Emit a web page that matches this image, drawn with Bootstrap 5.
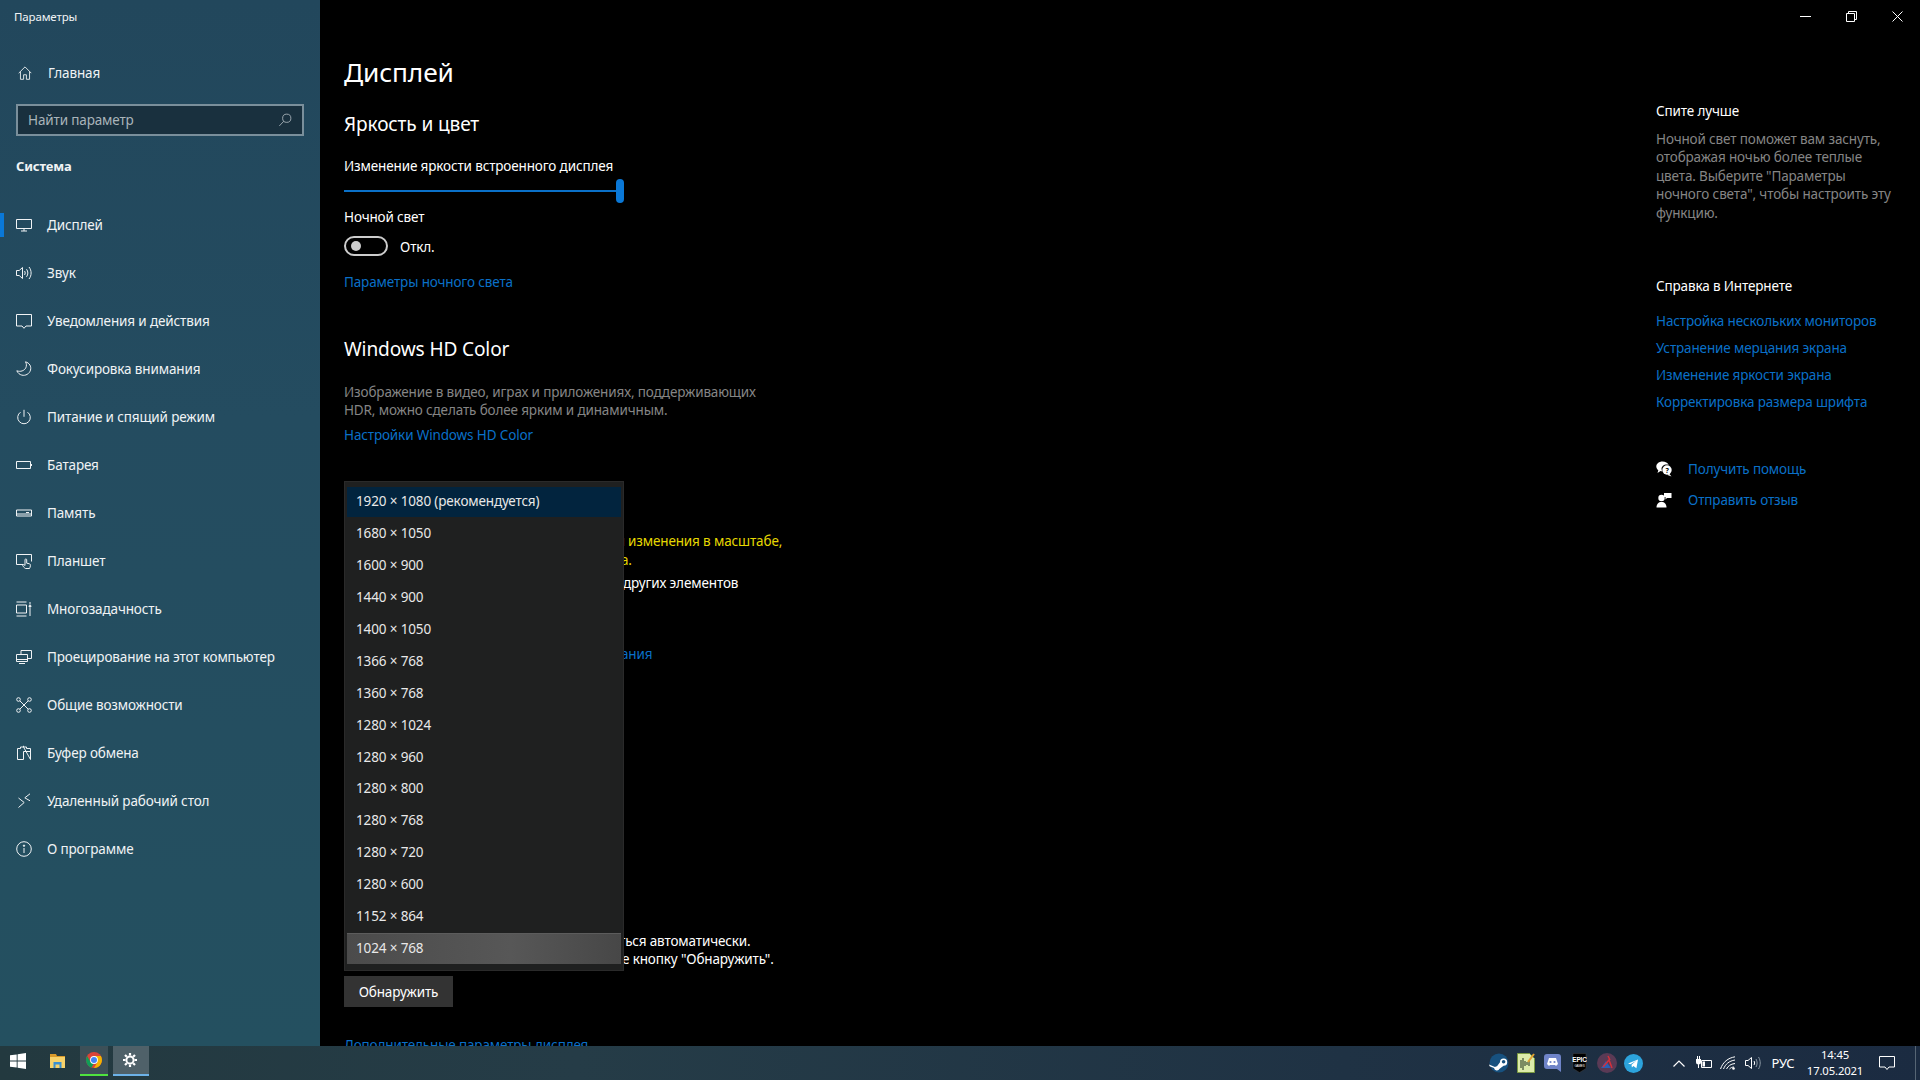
<!DOCTYPE html>
<html lang="ru">
<head>
  <meta charset="UTF-8">
  <title>Параметры</title>
  <link href="https://cdn.jsdelivr.net/npm/bootstrap@5.3.2/dist/css/bootstrap.min.css" rel="stylesheet">
  <style>
    html, body { height: 100%; }
    body {
      width: 1920px; height: 1080px; overflow: hidden; background: #000; color: #fff;
      font-family: "Noto Sans", "Open Sans", sans-serif; font-size: 13.5px; line-height: 20px; letter-spacing: -.14px;
    }
    svg { display: block; fill: none; stroke: currentColor; stroke-width: 1; flex: none; }
    a { text-decoration: none; color: #0a70c8; }
    .app-row { height: 1046px; }

    /* sidebar */
    .side-pane { width: 320px; background: linear-gradient(180deg, #22475c 0%, #244c60 40%, #245060 100%); color: #f0f3f5; }
    .app-name { font-size: 11.5px; padding: 7px 0 0 14px; height: 53px; }
    .side-link { height: 48px; padding-left: 16px; gap: 15px; color: #f0f3f5; }
    .side-link.home-link { height: 40px; padding-left: 18px; gap: 16px; }
    .side-link.on { position: relative; }
    .side-link.on::before { content: ""; position: absolute; left: 0; top: 12px; width: 4px; height: 24px; background: #0a78d7; }
    .search-box { margin: 11px 16px 0; height: 32px; border: 2px solid #7a8f9b; background: #19303e; color: #a9b4ba; padding: 0 10px; }
    .group-name { font-weight: 700; font-size: 13px; padding: 20px 0 0 16px; height: 65px; }

    /* main column */
    .main-pane { flex: 1; padding: 52px 0 0 24px; overflow: hidden; position: relative; }
    .page-title { font-size: 26.3px; line-height: 40px; font-weight: 400; margin: 0; }
    .sub-title { font-size: 19.1px; line-height: 28px; font-weight: 400; margin: 0; }
    .dim-text { color: #858585; line-height: 18px; }
    .gap-title-a { margin-top: 18px; }
    .label-a { margin-top: 18px; }
    .label-b { margin-top: 4px; }
    .bright-track { width: 280px; height: 24px; position: relative; margin-top: 3px; }
    .bright-track::before { content: ""; position: absolute; left: 0; right: 4px; top: 11px; height: 2px; background: #0a70c8; }
    .bright-track::after { content: ""; position: absolute; right: 0; top: 0; width: 8px; height: 24px; border-radius: 4px; background: #0a78d7; }
    .toggle-row { margin-top: 9px; height: 20px; }
    .toggle-off { width: 44px; height: 20px; border: 2px solid #ccc; border-radius: 10px; position: relative; }
    .toggle-off::after { content: ""; position: absolute; left: 5px; top: 3px; width: 10px; height: 10px; border-radius: 50%; background: #ccc; }
    .toggle-text { margin: 2px 0 0 12px; }
    .link-a { margin-top: 16px; }
    .hd-title { margin-top: 43px; }
    .hd-text { margin-top: 20px; }
    .link-b { margin-top: 6px; }
    .warn-text { color: #e6d800; line-height: 18.5px; }
    .warn-block { margin-top: 87px; }
    .frag-1 { padding-left: 273px; }
    .frag-2 { padding-left: 277px; }
    .frag-3 { margin-top: 4px; padding-left: 279px; }
    .frag-4 { margin-top: 51px; padding-left: 277px; }
    .frag-5 { margin-top: 268px; padding-left: 275px; line-height: 18px; }
    .frag-6 { padding-left: 278px; line-height: 18px; }
    .detect-btn { display: block; margin-top: 8px; background: #333; color: #fff; border: 0; border-radius: 0; width: 109px; height: 31px; padding: 0; font-size: 13.5px; line-height: 20px; letter-spacing: -.14px; }
    .detect-btn:hover { background: #333; color: #fff; }
    .link-c { margin-top: 28px; }

    /* open combobox */
    .res-menu { position: absolute; left: 24px; top: 481px; width: 280px; height: 490px; padding: 5px 2px 6px; background: #1f2020; border: 1px solid #2a2a2a; border-radius: 0; }
    .res-menu .list-group-item { height: 32px; padding: 0 9px; background: transparent; border: 0; color: #e8e8e8; line-height: 29px; border-radius: 0; margin: 0; }
    .res-menu .list-group-item.picked { height: 30px; margin-bottom: 2px; background: #02243e; }
    .res-menu .list-group-item.hovered { height: 30px; background: linear-gradient(90deg, #4b4b4b, #575757 60%, #474747); box-shadow: 0 -1px 0 #5c5c5c; }

    /* right column */
    .info-pane { width: 264px; }
    .win-controls { height: 32px; }
    .win-btn { width: 46px; height: 32px; }
    .info-body { padding-top: 69px; }
    .sleep-text { margin-top: 9px; line-height: 18.4px; }
    .help-head { margin-top: 54px; }
    .help-list { margin-top: 12px; }
    .help-list a { display: block; line-height: 27px; white-space: nowrap; }
    .help-row { height: 31px; gap: 16px; }
    .help-first { margin-top: 37px; }

    /* taskbar */
    .task-bar { height: 34px; background: linear-gradient(90deg, #23393f 0%, #253c47 30%, #1f3244 70%, #1b2b41 100%); position: relative; }
    .task-btn { height: 30px; margin-bottom: 4px; }
    .start-btn { width: 36px; padding-left: 10px; }
    .files-btn { width: 44px; padding-left: 14px; }
    .chrome-btn { width: 28px; background: #3d5058; border-bottom: 2px solid #4fe33f; height: 30px; padding-left: 6px; margin-right: 5px; }
    .gear-btn { width: 36px; background: #4f6169; border-bottom: 2px solid #6cb2e8; height: 30px; padding-left: 10px; }
    .tray-zone { position: absolute; right: 0; top: 0; height: 34px; color: #fff; }
    .tray-cell { width: 27px; height: 34px; }
    .tray-small { width: 24.5px; height: 34px; }
    .chevron-gap { margin-left: 20px; }
    .lang-cell { font-size: 13px; width: 36px; text-align: center; }
    .clock-cell { width: 72px; font-size: 11.3px; line-height: 16px; text-align: center; margin-left: -2px; }
    .notify-cell { width: 36px; margin-left: -2px; }
    .desk-edge { width: 1px; height: 34px; background: #566574; margin-left: 10px; margin-right: 4px; }
  </style>
</head>
<body>
  <div class="d-flex app-row">

    <nav class="side-pane d-flex flex-column">
      <div class="app-name">Параметры</div>
      <a class="side-link home-link d-flex align-items-center" href="#">
        <svg width="14" height="14" viewBox="0 0 16 16"><path d="M.8 8.200 8 1l7.200 7.200M2.800 6.500v8.700h3.600V10h3.200v5.200h3.600V6.500"/></svg>
        Главная
      </a>
      <div class="search-box d-flex align-items-center justify-content-between">
        <span>Найти параметр</span>
        <svg width="14" height="14" viewBox="0 0 16 16"><circle cx="10" cy="6" r="4.700"/><path d="M6.600 9.400 1.500 14.800"/></svg>
      </div>
      <div class="group-name">Система</div>
      <a class="side-link on d-flex align-items-center" href="#">
        <svg width="16" height="16" viewBox="0 0 16 16"><path d="M.5 2.500h15v9H.5zM8 11.500v2.500M5 14h6"/></svg>Дисплей</a>
      <a class="side-link d-flex align-items-center" href="#">
        <svg width="16" height="16" viewBox="0 0 16 16"><path d="M.5 5.500h2.700L6.500 2.500v11l-3.300-3H.5zM8.500 6c.9 1.200.9 2.800 0 4M10.500 4.200c1.800 2.200 1.800 5.400 0 7.600M13 2c2.800 3.400 2.800 8.600 0 12"/></svg>Звук</a>
      <a class="side-link d-flex align-items-center" href="#">
        <svg width="16" height="16" viewBox="0 0 16 16"><path d="M.5 1.500h15v11.500h-5.500L8 15.300 6 13H.5z"/></svg>Уведомления и действия</a>
      <a class="side-link d-flex align-items-center" href="#">
        <svg width="16" height="16" viewBox="0 0 16 16"><path d="M9.500.8c4 1.200 6 4.600 5 8.300-1 3.700-5 6-8.700 5C3.700 13.600 1.800 12 .8 9.800c3.700 1.300 7.500 0 9-3 .9-1.900.8-4.200-.3-6z"/></svg>Фокусировка внимания</a>
      <a class="side-link d-flex align-items-center" href="#">
        <svg width="16" height="16" viewBox="0 0 16 16"><path d="M8 .8v7M4.500 3.200a6.300 6.300 0 1 0 7 0"/></svg>Питание и спящий режим</a>
      <a class="side-link d-flex align-items-center" href="#">
        <svg width="16" height="16" viewBox="0 0 16 16"><path d="M.5 4.500h14v7H.5zM15.500 7v2"/></svg>Батарея</a>
      <a class="side-link d-flex align-items-center" href="#">
        <svg width="16" height="16" viewBox="0 0 16 16"><path d="M.5 5h15v6H.5zM10 7.500h3M.5 9h15"/></svg>Память</a>
      <a class="side-link d-flex align-items-center" href="#">
        <svg width="16" height="16" viewBox="0 0 16 16"><path d="M7 11.500H.5v-10h15v7M9.500 15.500c-1.500-1-3-2.500-2.800-3.500.2-.8 1.300-.5 2.300.5V6.800c0-1.200 1.700-1.200 1.700 0v3.400l2.500.5c1 .2 1.300 1 1.200 2-.1 1-.4 2-.9 2.800z"/></svg>Планшет</a>
      <a class="side-link d-flex align-items-center" href="#">
        <svg width="16" height="16" viewBox="0 0 16 16"><path d="M.5 1h10M.5 15h10M.5 4h10v8H.5zM14 1v2.500M14 7v8"/><circle cx="14" cy="5.200" r="1" fill="currentColor"/></svg>Многозадачность</a>
      <a class="side-link d-flex align-items-center" href="#">
        <svg width="16" height="16" viewBox="0 0 16 16"><path d="M5 5V1.500h10.500v8H12M.5 5.500h11v7H.5zM.5 10.500h11M3 14.500h6"/></svg>Проецирование на этот компьютер</a>
      <a class="side-link d-flex align-items-center" href="#">
        <svg width="16" height="16" viewBox="0 0 16 16"><circle cx="2.500" cy="2.500" r="1.800"/><circle cx="13.500" cy="2.500" r="1.800"/><circle cx="2.500" cy="13.500" r="1.800"/><circle cx="13.500" cy="13.500" r="1.800"/><path d="M3.800 3.800l8.400 8.400M12.200 3.800l-8.400 8.400"/></svg>Общие возможности</a>
      <a class="side-link d-flex align-items-center" href="#">
        <svg width="16" height="16" viewBox="0 0 16 16"><path d="M1.500 14.500V3.500h3V2h3V.8M7.500 2h3v1.500h4v11zM7.500 14.500V6.500h7M7.500 14.500h-6"/></svg>Буфер обмена</a>
      <a class="side-link d-flex align-items-center" href="#">
        <svg width="16" height="16" viewBox="0 0 16 16"><path d="M2.500 5l5.700 4.500L2.500 14.500M14 .8 8.800 4.800l5.200 3"/></svg>Удаленный рабочий стол</a>
      <a class="side-link d-flex align-items-center" href="#">
        <svg width="16" height="16" viewBox="0 0 16 16"><circle cx="8" cy="8" r="7.300"/><path d="M8 7v5"/><circle cx="8" cy="4.700" r=".7" fill="currentColor"/></svg>О программе</a>
    </nav>

    <main class="main-pane">
      <h1 class="page-title">Дисплей</h1>
      <h2 class="sub-title gap-title-a">Яркость и цвет</h2>
      <div class="label-a">Изменение яркости встроенного дисплея</div>
      <div class="bright-track"></div>
      <div class="label-b">Ночной свет</div>
      <div class="d-flex align-items-center toggle-row">
        <div class="toggle-off"></div>
        <span class="toggle-text">Откл.</span>
      </div>
      <a class="d-block link-a" href="#">Параметры ночного света</a>
      <h2 class="sub-title hd-title">Windows HD Color</h2>
      <div class="dim-text hd-text">Изображение в видео, играх и приложениях, поддерживающих<br>HDR, можно сделать более ярким и динамичным.</div>
      <a class="d-block link-b" href="#">Настройки Windows HD Color</a>

      <div class="warn-text warn-block">
        <div class="frag-1">я изменения в масштабе,</div>
        <div class="frag-2">а.</div>
      </div>
      <div class="frag-3">других элементов</div>
      <a class="d-block frag-4" href="#">ания</a>
      <div class="frag-5">ться автоматически.</div>
      <div class="frag-6">е кнопку "Обнаружить".</div>
      <button class="btn detect-btn" type="button">Обнаружить</button>
      <a class="d-block link-c" href="#">Дополнительные параметры дисплея</a>

      <ul class="list-group res-menu">
        <li class="list-group-item picked">1920 × 1080 (рекомендуется)</li>
        <li class="list-group-item">1680 × 1050</li>
        <li class="list-group-item">1600 × 900</li>
        <li class="list-group-item">1440 × 900</li>
        <li class="list-group-item">1400 × 1050</li>
        <li class="list-group-item">1366 × 768</li>
        <li class="list-group-item">1360 × 768</li>
        <li class="list-group-item">1280 × 1024</li>
        <li class="list-group-item">1280 × 960</li>
        <li class="list-group-item">1280 × 800</li>
        <li class="list-group-item">1280 × 768</li>
        <li class="list-group-item">1280 × 720</li>
        <li class="list-group-item">1280 × 600</li>
        <li class="list-group-item">1152 × 864</li>
        <li class="list-group-item hovered">1024 × 768</li>
      </ul>
    </main>

    <aside class="info-pane">
      <div class="win-controls d-flex justify-content-end">
        <div class="win-btn d-flex align-items-center justify-content-center">
          <svg width="11" height="11" viewBox="0 0 11 11"><path d="M0 5.500h11"/></svg></div>
        <div class="win-btn d-flex align-items-center justify-content-center">
          <svg width="11" height="11" viewBox="0 0 11 11"><path d="M.5 2.500h8v8h-8zM2.500 2.500V.5h8v8h-2"/></svg></div>
        <div class="win-btn d-flex align-items-center justify-content-center">
          <svg width="11" height="11" viewBox="0 0 11 11"><path d="M.5.500l10 10M10.500.500l-10 10"/></svg></div>
      </div>
      <div class="info-body">
        <div>Спите лучше</div>
        <div class="dim-text sleep-text">Ночной свет поможет вам заснуть,<br>отображая ночью более теплые<br>цвета. Выберите "Параметры<br>ночного света", чтобы настроить эту<br>функцию.</div>
        <div class="help-head">Справка в Интернете</div>
        <div class="help-list">
          <a href="#">Настройка нескольких мониторов</a>
          <a href="#">Устранение мерцания экрана</a>
          <a href="#">Изменение яркости экрана</a>
          <a href="#">Корректировка размера шрифта</a>
        </div>
        <a class="help-row d-flex align-items-center help-first" href="#">
          <svg class="text-white" width="16" height="16" viewBox="0 0 16 16"><path fill="#fff" stroke="none" d="M6.500.5C3 .5.300 2.700.300 5.500c0 1.500.8 2.800 2 3.700L1.500 12l3-2c.5.100 1 .2 1.500.2L5.500 8C5.500 5.500 7.800 3.500 10.500 3.500c.8 0 1.500.1 2.200.4C11.800 1.900 9.400.5 6.500.5z"/><circle cx="11" cy="9" r="4.700" fill="#fff" stroke="none"/><path fill="#fff" stroke="none" d="M13 12.500l2.500 3-4-1.500z"/><text x="11" y="11.500" font-size="7" font-weight="700" text-anchor="middle" fill="#000" stroke="none">?</text></svg>
          Получить помощь</a>
        <a class="help-row d-flex align-items-center" href="#">
          <svg class="text-white" width="16" height="16" viewBox="0 0 16 16"><circle cx="5.500" cy="6" r="3.200" fill="#fff" stroke="none"/><path fill="#fff" stroke="none" d="M.5 15.500c0-3.500 2-5.500 5-5.500s5 2 5 5.500z"/><path fill="#fff" stroke="none" d="M8 1h7.500v5H11L9.500 7.500V5H8z"/></svg>
          Отправить отзыв</a>
      </div>
    </aside>
  </div>

  <footer class="task-bar d-flex">
    <div class="task-btn start-btn d-flex align-items-center">
      <svg width="16" height="16" viewBox="0 0 16 16"><path fill="#fff" stroke="none" d="M0 2.300 6.700 1.400V7.600H0zM7.600 1.300 16 0V7.600H7.600zM0 8.400H6.700V14.600L0 13.700zM7.600 8.400H16V16L7.600 14.800z"/></svg>
    </div>
    <div class="task-btn files-btn d-flex align-items-center">
      <svg width="15" height="14" viewBox="0 0 15 14"><path fill="#d99a2b" stroke="none" d="M0 0h6l1 2h8v3H0z"/><path fill="#f7d26a" stroke="none" d="M0 3h15v11H0z"/><path fill="#3a8fd0" stroke="none" d="M3.500 8h8v6h-2v-3.500h-4V14h-2z"/></svg>
    </div>
    <div class="chrome-btn d-flex align-items-center">
      <svg width="16" height="16" viewBox="0 0 16 16"><circle cx="8" cy="8" r="8" fill="#db4437" stroke="none"/><path fill="#0f9d58" stroke="none" d="M8 16A8 8 0 0 1 1.100 4L4.500 10l4 .6L5.500 15.600z"/><path fill="#f4b400" stroke="none" d="M8 16a8 8 0 0 0 6.900-12H8l3.500 6z"/><circle cx="8" cy="8" r="3.900" fill="#fff" stroke="none"/><circle cx="8" cy="8" r="3" fill="#4285f4" stroke="none"/></svg>
    </div>
    <div class="gear-btn d-flex align-items-center">
      <svg width="14" height="14" viewBox="0 0 14 14"><circle cx="7" cy="7" r="3.600" stroke="#fff" stroke-width="2"/><path stroke="#fff" stroke-width="2.200" d="M7 0v2.500M7 11.500V14M0 7h2.500M11.500 7H14M2 2l1.800 1.800M10.200 10.200 12 12M12 2l-1.800 1.800M3.800 10.200 2 12"/></svg>
    </div>

    <div class="tray-zone d-flex align-items-center">
      <div class="tray-cell d-flex align-items-center justify-content-center">
        <svg width="20" height="20" viewBox="0 0 20 20"><circle cx="10" cy="10" r="9.500" fill="#17517f" stroke="none"/><path fill="#fff" stroke="none" d="M0 11.500 6 14a3 3 0 0 1 2-.8l3-4a3.600 3.600 0 1 1 3.600 3.600l-4 3A3 3 0 0 1 5 15L.6 13.200z"/><circle cx="14.600" cy="8.800" r="1.800" fill="#17517f" stroke="none"/></svg>
      </div>
      <div class="tray-cell d-flex align-items-center justify-content-center">
        <svg width="18" height="20" viewBox="0 0 18 20"><path fill="#dcebaa" stroke="#7a9a40" d="M.5.500h12l5 5v14H.5z"/><path stroke="#1f2d1a" d="M4 7v8M6 5v12M8 8v5M10 9v3M12 8v5"/><path stroke="#e0a030" stroke-width="2" d="M17 1 11 9"/></svg>
      </div>
      <div class="tray-cell d-flex align-items-center justify-content-center">
        <svg width="17" height="20" viewBox="0 0 17 20"><path fill="#6f84c8" stroke="none" d="M3 1h11a3 3 0 0 1 3 3v15l-4-3H3a3 3 0 0 1-3-3V4a3 3 0 0 1 3-3z"/><path fill="#fff" stroke="none" d="M5 5h7l2 6-2 2-1-1H6l-1 1-2-2z"/><circle cx="6.500" cy="9" r="1.100" fill="#6f84c8" stroke="none"/><circle cx="10.500" cy="9" r="1.100" fill="#6f84c8" stroke="none"/></svg>
      </div>
      <div class="tray-cell d-flex align-items-center justify-content-center">
        <svg width="15" height="20" viewBox="0 0 15 20"><path fill="#000" stroke="#444" stroke-width=".5" d="M1 .5h13v15l-6.500 4L1 15.500z"/><text x="7.500" y="9" text-anchor="middle" font-size="6.500" font-weight="700" fill="#fff" stroke="none" font-family="Liberation Sans, sans-serif">EPIC</text><text x="7.500" y="14" text-anchor="middle" font-size="3" fill="#fff" stroke="none" font-family="Liberation Sans, sans-serif">GAMES</text></svg>
      </div>
      <div class="tray-cell d-flex align-items-center justify-content-center">
        <svg width="20" height="20" viewBox="0 0 20 20"><circle cx="10" cy="10" r="10" fill="#5a3a55" stroke="none"/><path fill="#2b5fb5" stroke="none" d="M4 15l5-7 2 3 3 4z"/><path stroke="#d6303a" stroke-width="1.500" d="M6 14l6-7 3 8M11 3l2 4"/></svg>
      </div>
      <div class="tray-cell d-flex align-items-center justify-content-center">
        <svg width="19" height="19" viewBox="0 0 19 19"><circle cx="9.500" cy="9.500" r="9.500" fill="#2ca3dc" stroke="none"/><path fill="#fff" stroke="none" d="M4 9.500 14 5.400l-1.600 8.800-3-2.200-1.500 1.500-.4-2.700 5-4.300-6 3.700z"/></svg>
      </div>
      <div class="tray-small chevron-gap d-flex align-items-center justify-content-center">
        <svg width="12" height="7" viewBox="0 0 12 7"><path stroke-width="1.200" d="M.5 6.500 6 1l5.500 5.500"/></svg>
      </div>
      <div class="tray-small d-flex align-items-center justify-content-center">
        <svg width="16" height="14" viewBox="0 0 16 14"><path d="M5.500 4.500h10v7h-10z"/><path fill="#fff" stroke="none" d="M6.500 5.500H9v5H6.500z"/><path fill="#fff" stroke="none" d="M0 3h5v3a2.500 2.500 0 0 1-5 0zM1 0h1v3H1zM3 0h1v3H3zM2 8h1v4H2z"/></svg>
      </div>
      <div class="tray-small d-flex align-items-center justify-content-center">
        <svg width="16" height="14" viewBox="0 0 16 14"><path d="M.5 13C3 6 8 2 15 .8M3.500 13C5.500 8 9 5 15 4M6.500 13C8 10 10.500 8 15 7.500M9.500 13C10.500 12 12 11 14 11"/><circle cx="13.500" cy="12.500" r="1.300" fill="#fff" stroke="none"/></svg>
      </div>
      <div class="tray-small d-flex align-items-center justify-content-center">
        <svg width="16" height="14" viewBox="0 0 16 14"><path d="M.5 4.500h2.500L6.500 1.500v11L3 9.500H.5zM9 5c.8 1.200.8 2.800 0 4"/><path stroke="#8b98a3" d="M11 3c1.500 2.500 1.500 5.500 0 8M13.500 1c2.300 3.600 2.300 8.400 0 12"/></svg>
      </div>
      <div class="lang-cell">РУС</div>
      <div class="clock-cell">14:45<br>17.05.2021</div>
      <div class="notify-cell d-flex justify-content-center">
        <svg width="16" height="15" viewBox="0 0 16 15"><path d="M.5.500h15v10.500h-5.500L8 13.500 6 11H.5z"/></svg>
      </div>
      <div class="desk-edge"></div>
    </div>
  </footer>
</body>
</html>
